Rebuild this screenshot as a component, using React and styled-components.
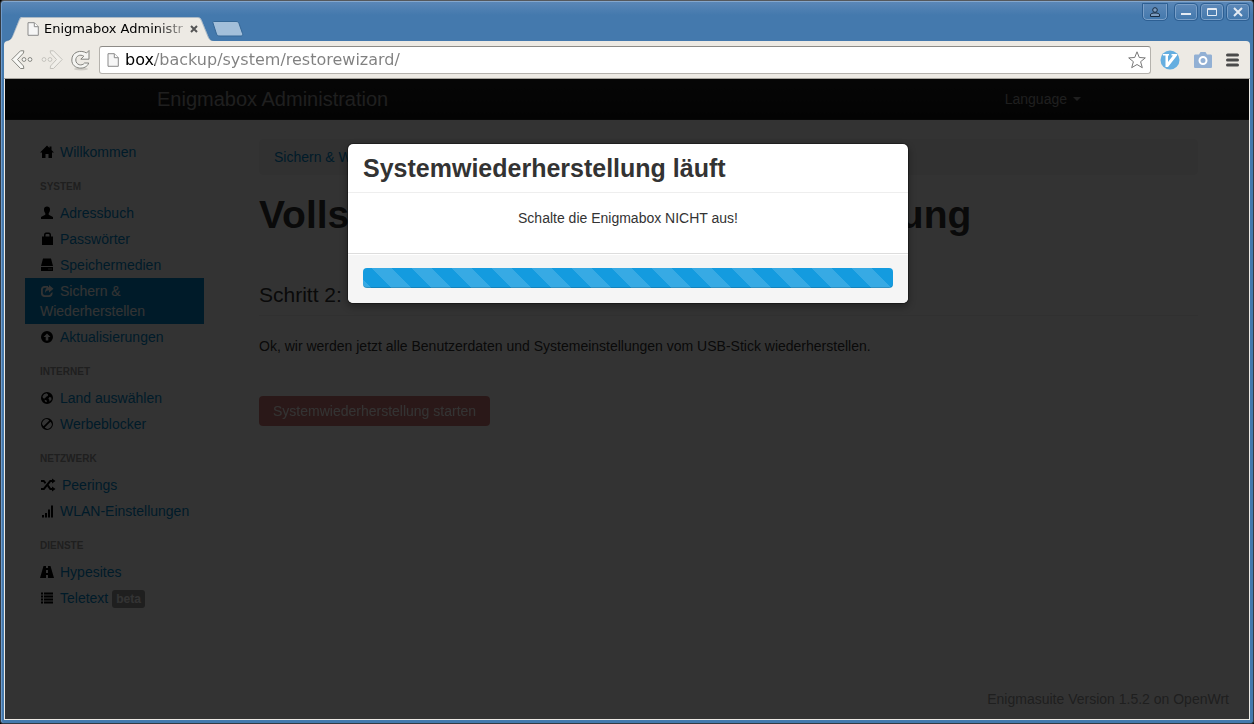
import React from "react";
import styled, { createGlobalStyle, css } from "styled-components";

const GlobalStyle = createGlobalStyle`
  * { box-sizing: border-box; }
  body {
    margin: 0;
    background: #000;
    color: #333;
    font: 14px/20px "Liberation Sans", Arial, sans-serif;
  }
  a { text-decoration: none; }
  button { font: inherit; }
`;

const chromeFont = css`
  font-family: "DejaVu Sans", sans-serif;
`;

/* ---------- window frame ---------- */

const WindowFrame = styled.div`
  min-height: 100vh;
  display: flex;
  flex-direction: column;
  border: 1px solid #333a42;
  border-top-color: #55585c;
  border-radius: 4px 4px 3px 3px;
  background: linear-gradient(#5c88b8, #4479ad 14px, #4479ad);
  box-shadow: inset 0 1px 0 #84a7cd, inset 1px 0 0 #6f9bcb;
`;

const TitleBar = styled.header`
  display: flex;
  justify-content: space-between;
  height: 40px;
  padding: 0 4px 0 10px;
`;

const TabStrip = styled.div`
  display: flex;
  align-items: flex-end;
`;

const Tab = styled.div`
  ${chromeFont}
  position: relative;
  display: flex;
  align-items: center;
  width: 201px;
  height: 24px;
  padding: 0 14px 0 16px;
  color: #000;
  font-size: 13px;
`;

const TabShape = styled.svg`
  position: absolute;
  left: -7px;
  top: 0;
`;

const TabTitle = styled.span`
  position: relative;
  flex: 1;
  margin-left: 5px;
  white-space: nowrap;
  mask-image: linear-gradient(to right, #000 110px, rgba(0, 0, 0, 0.3) 140px);
`;

const ChromeButton = styled.button`
  position: relative;
  display: flex;
  align-items: center;
  justify-content: center;
  padding: 0;
  border: 0;
  background: none;
`;

const NewTab = styled(ChromeButton)`
  height: 24px;
`;

const WindowButtons = styled.div`
  display: flex;
  gap: 4px;
  align-items: flex-start;
  padding-top: 3px;
`;

const WindowButton = styled.button`
  display: flex;
  align-items: center;
  justify-content: center;
  width: 22px;
  height: 16px;
  padding: 0;
  border: 1px solid #7ba0c8;
  border-radius: 3px;
  outline: 1px solid #2d5f93;
  background: linear-gradient(#5c88b8, #4479ad);
`;

const ProfileButton = styled(WindowButton)`
  width: 24px;
  margin-right: 4px;
  border-top: 0;
  border-radius: 0 0 4px 4px;
`;

const Toolbar = styled.div`
  display: flex;
  align-items: center;
  height: 38px;
  margin: 0 3px;
  padding: 0 11px 0 7px;
  border-bottom: 1px solid #a6a39d;
  border-radius: 4px 4px 0 0;
  background: #edeae4;
`;

const NavButtons = styled.div`
  display: flex;
  gap: 8px;
  margin-right: 6px;
`;

const AddressBar = styled.label`
  flex: 1;
  display: flex;
  align-items: center;
  height: 28px;
  padding: 0 4px 0 7px;
  border: 1px solid #b5b2ad;
  border-top-color: #8d8b87;
  border-radius: 3px;
  background: #fff;
`;

const AddressInput = styled.input`
  ${chromeFont}
  flex: 1;
  min-width: 0;
  height: 24px;
  margin: 0 0 0 6px;
  padding: 0;
  border: 0;
  outline: 0;
  background: linear-gradient(to right, #000 30px, #808080 30px);
  background-clip: text;
  color: transparent;
  font-size: 16px;
`;

const Extensions = styled.div`
  display: flex;
  align-items: center;
  gap: 14px;
  margin-left: 9px;
`;

/* ---------- web page ---------- */

const Viewport = styled.div`
  position: relative;
  flex: 1;
  display: flex;
  flex-direction: column;
  margin: 0 3px 3px;
  border: solid #edeae4;
  border-width: 0 1px 1px;
  background: #fff;
`;

const NavBar = styled.nav`
  height: 41px;
  border-bottom: 1px solid #252525;
  background: linear-gradient(#222, #111);
`;

const NavInner = styled.div`
  display: flex;
  justify-content: space-between;
  align-items: center;
  max-width: 940px;
  height: 40px;
  margin: 0 auto;
  padding-right: 16px;
`;

const Brand = styled.a`
  color: #999;
  font-size: 20px;
`;

const LanguageButton = styled.button`
  display: flex;
  align-items: center;
  gap: 6px;
  padding: 0;
  border: 0;
  background: none;
  color: #999;
`;

const Caret = styled.span`
  border: 4px solid transparent;
  border-top-color: #999;
  border-bottom: 0;
`;

const Columns = styled.div`
  display: flex;
  gap: 55px;
  padding: 19px 51px 0 20px;
`;

const Sidebar = styled.aside`
  flex: none;
  width: 179px;
`;

const GroupTitle = styled.h2`
  margin: 9px 0 0;
  padding: 3px 15px;
  color: #999;
  font-size: 10px;
  line-height: 20px;
  text-transform: uppercase;
`;

const NavList = styled.ul`
  margin: 0;
  padding: 0;
  list-style: none;
`;

const NavLink = styled.a`
  display: block;
  padding: 3px 10px 3px 15px;
  background: ${(p) => (p.$active ? "#08c" : "none")};
  color: ${(p) => (p.$active ? "#fff" : "#08c")};
`;

const GlyphSvg = styled.svg`
  width: ${(p) => (p.$wide ? 16 : 14)}px;
  height: 14px;
  margin-right: 6px;
  vertical-align: -2px;
  fill: ${(p) => (p.$light ? "#fff" : "#000")};
`;

const Badge = styled.span`
  padding: 2px 4px;
  border-radius: 3px;
  background: #999;
  color: #fff;
  font-size: 12px;
  font-weight: bold;
  line-height: 14px;
`;

const Main = styled.main`
  flex: 1;
  min-width: 0;
`;

const Breadcrumb = styled.div`
  padding: 8px 15px;
  border-radius: 4px;
  background: #f5f5f5;
  a { color: #08c; }
`;

const PageTitle = styled.h1`
  margin: 20px 0 40px;
  font-size: 39px;
  line-height: 40px;
  white-space: nowrap;
`;

const StepTitle = styled.h2`
  margin: 0 0 20px;
  border-bottom: 1px solid #eee;
  font-size: 21px;
  font-weight: normal;
  line-height: 40px;
`;

const Text = styled.p`
  margin: 0 0 40px;
`;

const DangerButton = styled.button`
  height: 30px;
  padding: 0 14px;
  border: 0;
  border-radius: 4px;
  background: #bd362f;
  color: #fff;
  opacity: 0.65;
`;

const Footer = styled.footer`
  margin-top: auto;
  padding: 0 20px 10px;
  color: #999;
  text-align: right;
`;

/* ---------- modal ---------- */

const Backdrop = styled.div`
  position: absolute;
  inset: 0;
  background: rgba(0, 0, 0, 0.8);
`;

const Modal = styled.section`
  position: absolute;
  top: 10%;
  left: 50%;
  width: 562px;
  margin-left: -280px;
  border: 1px solid rgba(0, 0, 0, 0.3);
  border-radius: 6px;
  background: #fff;
  background-clip: padding-box;
  box-shadow: 0 3px 7px rgba(0, 0, 0, 0.3);
  overflow: hidden;
`;

const ModalHeader = styled.div`
  padding: 9px 15px;
  border-bottom: 1px solid #eee;
  h3 {
    margin: 0;
    font-size: 25px;
    line-height: 30px;
  }
`;

const ModalBody = styled.div`
  padding: 15px 15px 25px;
  text-align: center;
`;

const ModalFooter = styled.div`
  padding: 14px 15px 15px;
  border-top: 1px solid #ddd;
  background: #f5f5f5;
  box-shadow: inset 0 1px 0 #fff;
`;

const ProgressBar = styled.div`
  height: 20px;
  border-radius: 4px;
  background: #149bdf
    linear-gradient(
      45deg,
      rgba(255, 255, 255, 0.15) 25%,
      transparent 25%,
      transparent 50%,
      rgba(255, 255, 255, 0.15) 50%,
      rgba(255, 255, 255, 0.15) 75%,
      transparent 75%
    )
    9px 0 / 40px 40px;
  box-shadow: inset 0 -1px 0 rgba(0, 0, 0, 0.15);
`;

/* ---------- drawings ---------- */

const glyphs = {
  home: <path d="M7 0.5 0 7.5h2V13h3.5V9h3v4H12V7.5h2L11.5 5V1.5h-2V3z" />,
  user: <path d="M4 3.5C4 1.3 5.2.5 7 .5s3 .8 3 3c0 1.700-.6 3-1.300 3.800v1.500L13 11v2H1v-2l4.300-2.200V7.300C4.600 6.500 4 5.200 4 3.500z" />,
  lock: <path fillRule="evenodd" d="M2 4.500h2V3c0-1.500.8-2.500 2-2.500h3c1.200 0 2 1 2 2.500v1.500h2V13H2zM5.500 4.500h4V3c0-.7-.3-1-.9-1H6.400c-.6 0-.9.3-.9 1z" />,
  hdd: <path fillRule="evenodd" d="M3 .5h8L13 8H1zM1 9h12v4H1zM8.500 10.500v1h1v-1zM10.500 10.500v1h1v-1z" />,
  share: <path d="M8 2v1.800H5c-1.200 0-2.200.9-2.200 2.200v3c0 1.200.9 2.200 2.200 2.200h3.500c1.200 0 2-.8 2.200-1.700l1.800-1.500v1.500c0 2-1.500 3.500-3.500 3.500H4.500C2.500 13 1 11.500 1 9.500v-4C1 3.500 2.500 2 4.500 2zM9 1l4.500 3.800L9 8.500V6.300C7 6.300 6 7.200 5 9c0-3.500 1.200-5.600 4-5.900z" />,
  up: <path fillRule="evenodd" d="M7 1a6 6 0 1 1 0 12A6 6 0 0 1 7 1zM7 3.500 3.500 7h2.200v3.500h2.600V7h2.200z" />,
  globe: <path fillRule="evenodd" d="M7 1a6 6 0 1 1 0 12A6 6 0 0 1 7 1zM6.500 2.300 4 3.200 2.500 5.500 3 7.200l1.800.2 1.400-1.700L7.800 5 8 3.500zM9.500 6 8.300 7.800l1 .9.200 2L11.500 8.500 11.300 6.500zM4.500 8.500l.5 2 1.500.8.500-1.500z" />,
  ban: <path fillRule="evenodd" d="M7 1a6 6 0 1 1 0 12A6 6 0 0 1 7 1zM9.300 3.500A4 4 0 0 0 3.500 9.300zM10.500 4.700 4.700 10.500A4 4 0 0 0 10.500 4.700z" />,
  random: <path d="M1 2h3.200l2 2.400-1.300 1.500L3.300 4H1zM1 10h2.300l6.500-8H12V.5L15.500 3 12 5.500V4h-1.200l-6.500 8H1zM7.300 8.400l1.300-1.600L10.800 10H12V8.500l3.500 2.500-3.500 2.500V12H9.800z" />,
  signal: <path d="M2 11h2v2.500H2zM5 9h2v4.500H5zM8 5.500h2v8H8zM11 1.500h2v12h-2z" />,
  road: <path fillRule="evenodd" d="M3.500 1H6v2h2V1h2.500L14 13H8v-3H6v3H0zM6 5v3h2V5z" />,
  list: <path d="M1 1.500h2v2H1zM4 1.500h9v2H4zM1 4.500h2v2H1zM4 4.500h9v2H4zM1 7.500h2v2H1zM4 7.500h9v2H4zM1 10.500h2v2H1zM4 10.500h9v2H4z" />,
};

const Glyph = ({ name, light }) => (
  <GlyphSvg
    viewBox={name === "random" ? "0 0 16 14" : "0 0 14 14"}
    $wide={name === "random"}
    $light={light}
    aria-hidden="true"
  >
    {glyphs[name]}
  </GlyphSvg>
);

const PageIconSvg = styled.svg`
  position: relative;
  flex: none;
`;

const PageIcon = ({ height = 14 }) => (
  <PageIconSvg width="12" height={height} viewBox="0 0 12 14" aria-hidden="true">
    <path d="M1 .7h6.300L11.300 4.700v8.600H1z" fill="#f6f6f6" stroke="#8a8a8a" />
    <path d="M7.300.7v4h4" fill="#fff" stroke="#8a8a8a" />
  </PageIconSvg>
);

const ArrowIcon = ({ forward }) => (
  <svg width="22" height="22" viewBox="0 0 22 22" aria-hidden="true" opacity={forward ? 0.4 : 1}>
    <g
      transform={forward ? "translate(22 0) scale(-1 1)" : undefined}
      fill="#f8f8f5"
      stroke="#85857f"
    >
      <path d="M.8 10.500 9.500 1.800h3.300L12.500 4 6.500 10.500l6 6.500.3 2.500H9.500z" />
      <circle cx="13" cy="10.500" r="1.900" />
      <circle cx="19" cy="10.500" r="1.900" />
    </g>
  </svg>
);

const ReloadIcon = () => (
  <svg width="22" height="22" viewBox="0 0 22 22" aria-hidden="true">
    <ellipse cx="10" cy="20" rx="7" ry="1.500" fill="#cfccc6" />
    <path
      d="M15.500 4 18 1.500v8.700H9.800l3-3C9 4.800 4.800 7 4.800 11c0 5 6.200 6.500 8.700 3h4.200C15.500 21.500.8 21 .8 11 .8 2.500 10 .5 15.500 4z"
      fill="#f5f5f2"
      stroke="#83837e"
    />
  </svg>
);

const StarIcon = () => (
  <svg width="18" height="18" viewBox="0 0 18 18" aria-hidden="true">
    <path d="M9 .8 11.300 6.500l6 .4-4.700 3.800 1.700 6L9 13.500l-5.300 3.200 1.700-6L.7 6.900l6-.4z" fill="#fff" stroke="#777" />
  </svg>
);

const VimIcon = () => (
  <svg width="20" height="20" viewBox="0 0 20 20" aria-hidden="true">
    <circle cx="10" cy="10" r="9.500" fill="#65aee0" />
    <path d="M3 4h6v1.500H8V12l5-6.500h-1.500V4H17v1.500L8 17H5.500V5.500H3z" fill="#fff" />
  </svg>
);

const CameraIcon = () => (
  <svg width="18" height="16" viewBox="0 0 18 16" aria-hidden="true">
    <path d="M0 4c0-1 .5-1.500 1.500-1.500H5L6.500 0h5L13 2.500h3.500c1 0 1.500.5 1.500 1.500v10.500c0 1-.5 1.500-1.500 1.500h-15C.5 16 0 15.500 0 14.500z" fill="#92b0d4" />
    <circle cx="9" cy="8.500" r="3.500" fill="#92b0d4" stroke="#fff" strokeWidth="2" />
  </svg>
);

const MenuIcon = () => (
  <svg width="13" height="14" viewBox="0 0 13 14" aria-hidden="true">
    <path d="M1.500 2h10M1.500 7h10M1.500 12h10" stroke="#4a4a4a" strokeWidth="3" strokeLinecap="round" />
  </svg>
);

const groups = [
  { items: [{ icon: "home", label: "Willkommen" }] },
  {
    title: "System",
    items: [
      { icon: "user", label: "Adressbuch" },
      { icon: "lock", label: "Passwörter" },
      { icon: "hdd", label: "Speichermedien" },
      { icon: "share", label: "Sichern & Wiederherstellen", active: true },
      { icon: "up", label: "Aktualisierungen" },
    ],
  },
  {
    title: "Internet",
    items: [
      { icon: "globe", label: "Land auswählen" },
      { icon: "ban", label: "Werbeblocker" },
    ],
  },
  {
    title: "Netzwerk",
    items: [
      { icon: "random", label: "Peerings" },
      { icon: "signal", label: "WLAN-Einstellungen" },
    ],
  },
  {
    title: "Dienste",
    items: [
      { icon: "road", label: "Hypesites" },
      { icon: "list", label: "Teletext", badge: "beta" },
    ],
  },
];

const BrowserChrome = () => (
  <>
    <TitleBar>
      <TabStrip>
        <Tab>
          <TabShape width="216" height="24" viewBox="0 0 218 24" preserveAspectRatio="none" aria-hidden="true">
            <path d="M0 24c5 0 7-1 8.500-5L15 3c1-2.500 2-3 4-3h176c2.500 0 3.500 1 4.500 3l7 17c1.500 3 2.500 4 6.500 4z" fill="#edeae4" />
            <path d="M2 23.500c4 0 5.500-1.500 7-5L15.500 3c1-2 2-2.500 3.500-2.500h176c2 0 3 .5 4 2.500l7 17c1.500 3 2.500 3.500 5 3.500" fill="none" stroke="#315f8f" strokeOpacity=".35" />
          </TabShape>
          <PageIcon />
          <TabTitle>Enigmabox Administr</TabTitle>
          <ChromeButton aria-label="Tab schließen">
            <svg width="8" height="8" viewBox="0 0 8 8" aria-hidden="true">
              <path d="m1 1 6 6M7 1 1 7" stroke="#555" strokeWidth="2" />
            </svg>
          </ChromeButton>
        </Tab>
        <NewTab aria-label="Neuer Tab">
          <svg width="32" height="16" viewBox="0 0 32 16" aria-hidden="true">
            <path d="M2 .5h22c1.500 0 2.500.5 3 2l3.500 10c.5 1.500 0 2.500-1.500 2.500H8c-2 0-3-.5-3.500-2L1 2C.7 1 1 .5 2 .5z" fill="#a3bfda" stroke="#356796" />
          </svg>
        </NewTab>
      </TabStrip>
      <WindowButtons>
        <ProfileButton aria-label="Profil">
          <svg width="10" height="10" viewBox="0 0 10 10" fill="#7d9dc0" stroke="#182b40" aria-hidden="true">
            <path d="M.5 9.500V8C.5 6.500 2 6 5 6s4.500.5 4.500 2v1.500z" />
            <circle cx="5" cy="3" r="2.300" />
          </svg>
        </ProfileButton>
        <WindowButton aria-label="Minimieren">
          <svg width="12" height="10" viewBox="0 0 12 10" aria-hidden="true">
            <path d="M1 7h10" stroke="#e4ebf3" strokeWidth="2" />
          </svg>
        </WindowButton>
        <WindowButton aria-label="Maximieren">
          <svg width="12" height="10" viewBox="0 0 12 10" aria-hidden="true">
            <path d="M1.500 1.500h9v7h-9zM1 2.500h10" fill="none" stroke="#e4ebf3" />
          </svg>
        </WindowButton>
        <WindowButton aria-label="Schließen">
          <svg width="10" height="10" viewBox="0 0 10 10" aria-hidden="true">
            <path d="m1 1 8 8M9 1 1 9" stroke="#e4ebf3" strokeWidth="2" />
          </svg>
        </WindowButton>
      </WindowButtons>
    </TitleBar>
    <Toolbar>
      <NavButtons>
        <ChromeButton aria-label="Zurück"><ArrowIcon /></ChromeButton>
        <ChromeButton aria-label="Vorwärts"><ArrowIcon forward /></ChromeButton>
        <ChromeButton aria-label="Neu laden"><ReloadIcon /></ChromeButton>
      </NavButtons>
      <AddressBar>
        <PageIcon height={16} />
        <AddressInput aria-label="Adresse" defaultValue="box/backup/system/restorewizard/" />
        <ChromeButton aria-label="Lesezeichen"><StarIcon /></ChromeButton>
      </AddressBar>
      <Extensions>
        <ChromeButton aria-label="Vimium"><VimIcon /></ChromeButton>
        <ChromeButton aria-label="Bildschirmfoto"><CameraIcon /></ChromeButton>
        <ChromeButton aria-label="Menü"><MenuIcon /></ChromeButton>
      </Extensions>
    </Toolbar>
  </>
);

const SideNav = () => (
  <Sidebar>
    {groups.map((group) => (
      <React.Fragment key={group.items[0].label}>
        {group.title && <GroupTitle>{group.title}</GroupTitle>}
        <NavList>
          {group.items.map((item) => (
            <li key={item.label}>
              <NavLink href="#" $active={item.active}>
                <Glyph name={item.icon} light={item.active} />
                {item.label}
                {item.badge && <> <Badge>{item.badge}</Badge></>}
              </NavLink>
            </li>
          ))}
        </NavList>
      </React.Fragment>
    ))}
  </Sidebar>
);

export default function App() {
  return (
    <>
      <GlobalStyle />
      <WindowFrame>
        <BrowserChrome />
        <Viewport>
          <NavBar>
            <NavInner>
              <Brand href="#">Enigmabox Administration</Brand>
              <LanguageButton>Language <Caret /></LanguageButton>
            </NavInner>
          </NavBar>
          <Columns>
            <SideNav />
            <Main>
              <Breadcrumb><a href="#">Sichern &amp; Wiederherstellen</a></Breadcrumb>
              <PageTitle>Vollständige Systemwiederherstellung</PageTitle>
              <StepTitle>Schritt 2:</StepTitle>
              <Text>Ok, wir werden jetzt alle Benutzerdaten und Systemeinstellungen vom USB-Stick wiederherstellen.</Text>
              <DangerButton disabled>Systemwiederherstellung starten</DangerButton>
            </Main>
          </Columns>
          <Footer>Enigmasuite Version 1.5.2 on OpenWrt</Footer>
          <Backdrop />
          <Modal role="dialog" aria-labelledby="modal-title">
            <ModalHeader><h3 id="modal-title">Systemwiederherstellung läuft</h3></ModalHeader>
            <ModalBody>Schalte die Enigmabox NICHT aus!</ModalBody>
            <ModalFooter>
              <ProgressBar role="progressbar" aria-label="Systemwiederherstellung" />
            </ModalFooter>
          </Modal>
        </Viewport>
      </WindowFrame>
    </>
  );
}
